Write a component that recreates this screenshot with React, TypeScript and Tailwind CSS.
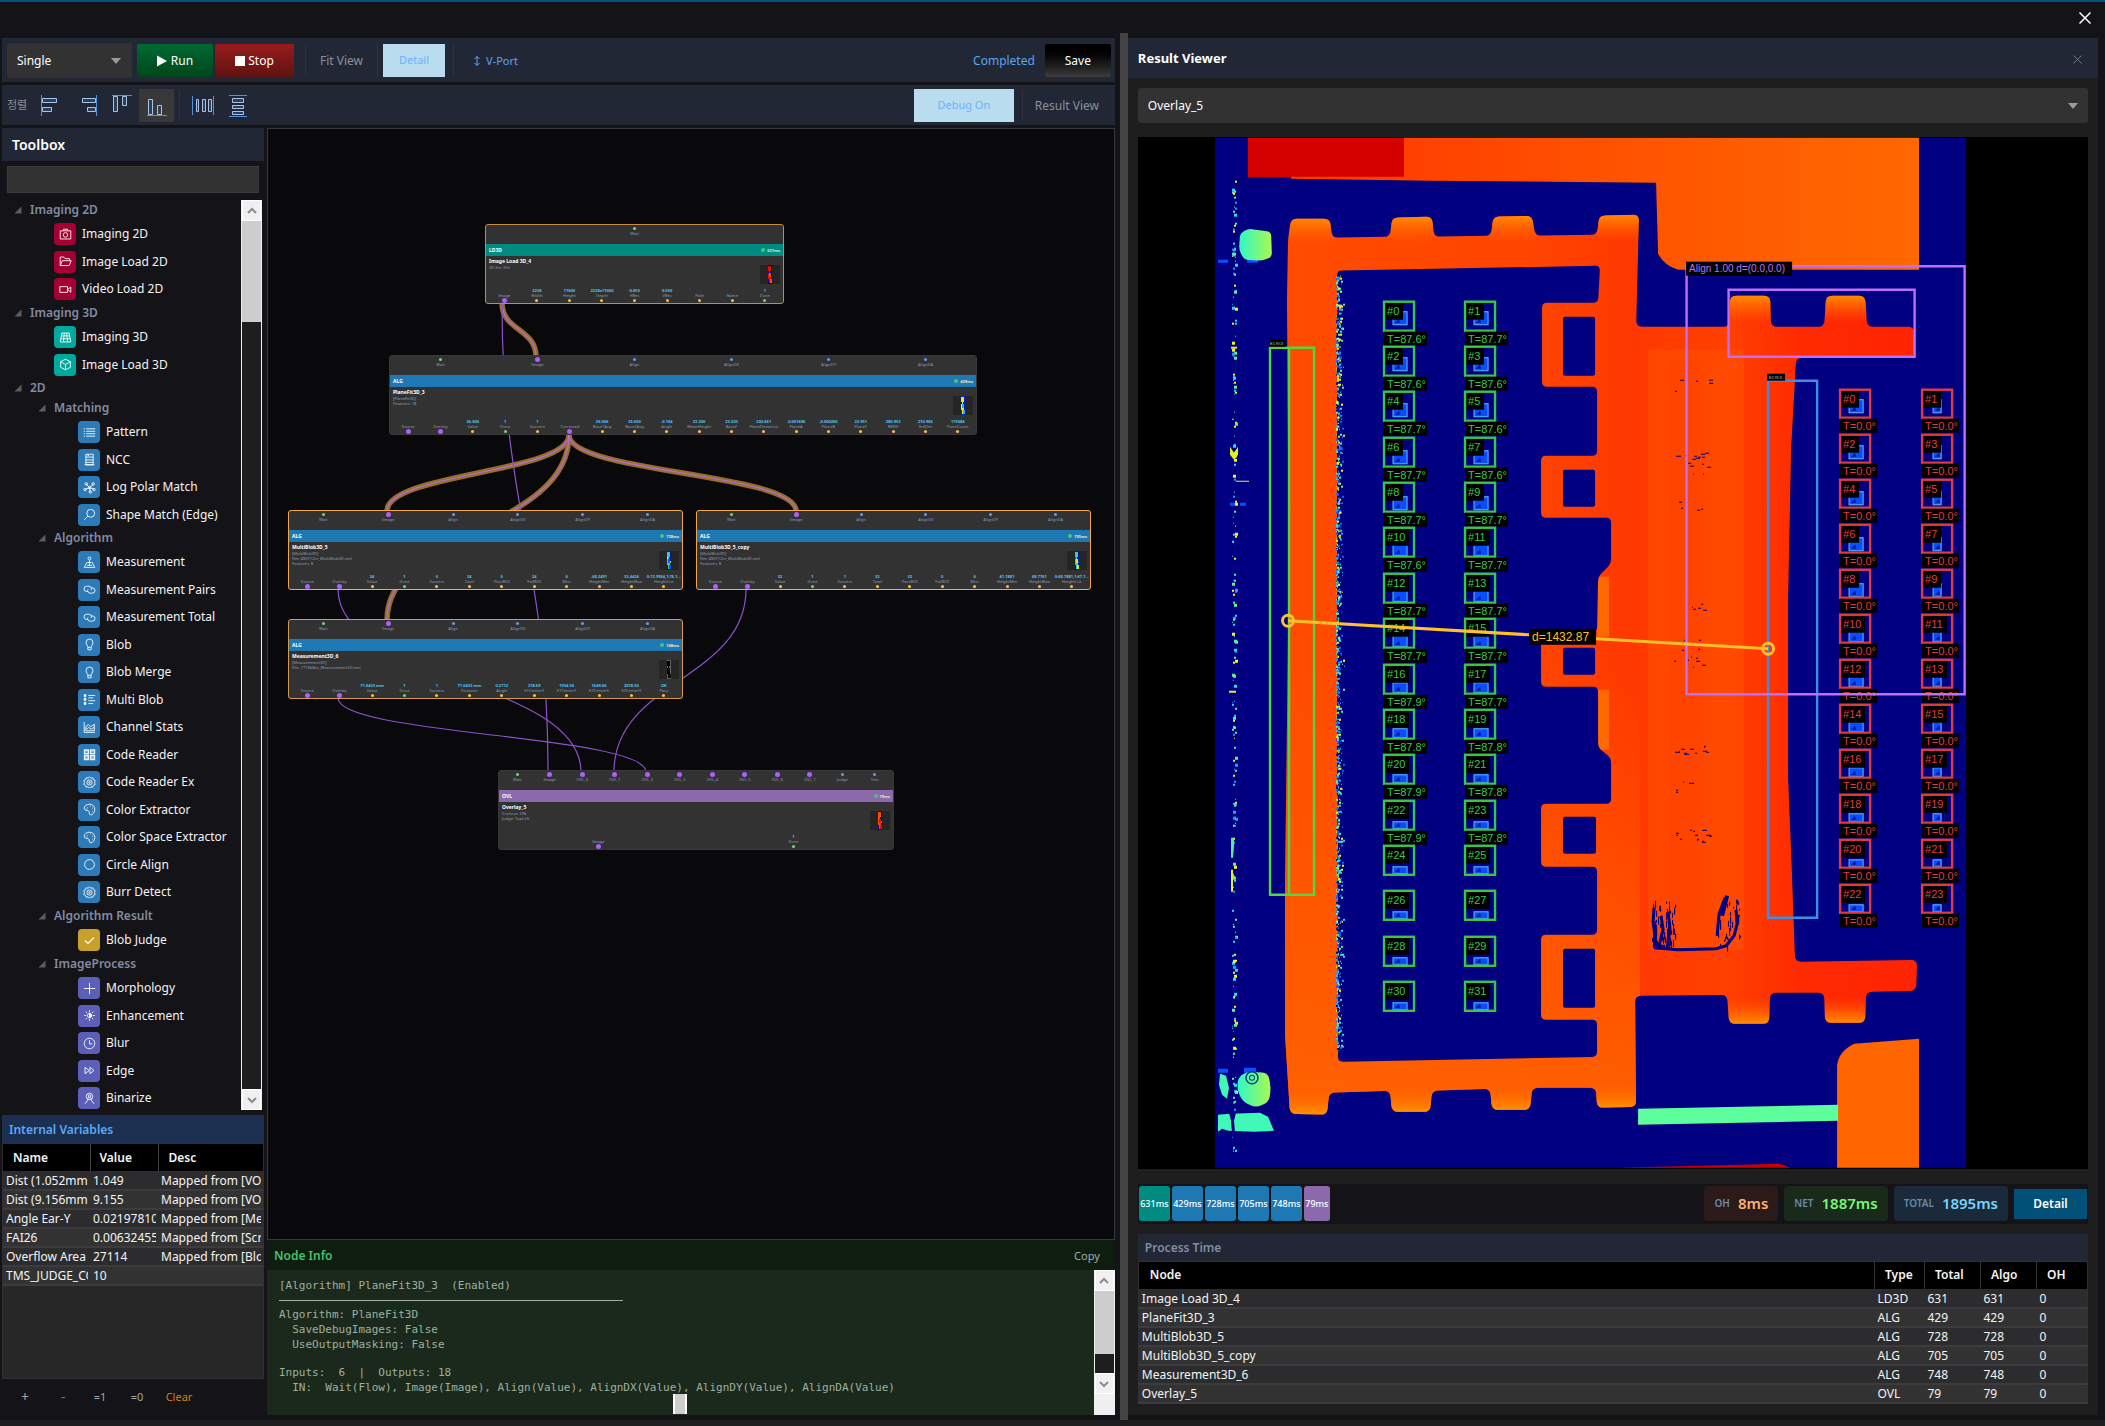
import React from "react";

/* ---------- Icons ---------- */

const glyphs: Record<string, React.ReactNode> = {
  camera: (
    <>
      <path d="M1.5 3.5h13v10h-13z" />
      <path d="M5.5 3V1.5h5V3" />
      <circle cx="8" cy="8.5" r="2.8" />
    </>
  ),
  folder: <path d="M1.5 13V2.5H6L7.5 4.5H13V7M1.5 13 4 7h11l-2.5 6z" />,
  video: (
    <>
      <path d="M1 4.5h9.5v7H1z" />
      <path d="M10.5 8 14.5 5v6.5z" />
    </>
  ),
  grid: <path d="M3.5 2.5h9l2 11h-13zM6.5 2.5l-1 11M9.5 2.5l1 11M3 6h10M2.5 9.5h11" />,
  cube: <path d="M8 1.5 14 4.5v7L8 14.5 2 11.5v-7zM2 4.5 8 8l6-3.5M8 8v6.500" />,
  lines: <path d="M4 3.5h11M4 6.5h11M4 9.5h11M4 12.5h11M1 3.5h1.5M1 6.5h1.5M1 9.5h1.5M1 12.5h1.5" />,
  server: <path d="M3.5 1.5h9v13h-9zM3.5 5h9M3.5 8.5h9M3.5 11.500h9M2 14.5h12M5.5 3.2h2" />,
  hub: (
    <>
      <path d="m8 8-4-4M8 8l4.5-3.5M8 8l-5 2.5M8 8l1 5M8 8l5 2" />
      <circle cx="8" cy="8" r="1.6" />
      <circle cx="4" cy="3.5" r="1.5" />
      <circle cx="12.5" cy="3.5" r="1.5" />
      <circle cx="2.5" cy="10.5" r="1.5" />
      <circle cx="9" cy="13.5" r="1.5" />
      <circle cx="13.5" cy="10.5" r="1.5" />
    </>
  ),
  search: (
    <>
      <circle cx="9.5" cy="6.5" r="4.8" />
      <path d="M6 10 1.5 14.5" />
    </>
  ),
  measure: (
    <>
      <circle cx="8" cy="3" r="1.8" />
      <path d="M8 5v6M5 7.5 1.5 14h13L11 7.5M5 11.5h6M5.5 8h5" />
    </>
  ),
  link: (
    <>
      <path d="M6.5 10.5h-2a3 3 0 0 1 0-6.500h3a3 3 0 0 1 2.500 4.500" />
      <path d="M9.5 6h2a3 3 0 0 1 0 6.500h-3A3 3 0 0 1 6 8" />
    </>
  ),
  bulb: <path d="M6 11.5C6 9.5 3.8 8.5 3.8 5.5a4.2 4.2 0 0 1 8.4 0c0 3-2.200 4-2.200 6zM6 11.5v3h4v-3" />,
  detail: (
    <>
      <path d="M6.5 3H15M6.5 6h6M6.5 9.5H15M6.5 13h6" />
      <path d="M1.5 2h2v2.5h-2zM1.5 6.5h2V9h-2zM1.5 11.5h2V14h-2z" fill="currentColor" />
    </>
  ),
  chart: (
    <>
      <path d="M1.5 1.5V14h13" />
      <path d="M3.5 12V7l3-2.5 3 2.5L14 4v8z" />
      <path d="m4 10 3-2 3 2 3.5-2" />
    </>
  ),
  qr: (
    <>
      <path d="M2 2.5h4.500v4.500H2zM9.5 2.5H14v4.500H9.500zM2 9.5h4.500V14H2zM9.5 9.5H14V14H9.500z" strokeWidth="2" />
      <path d="M4 4.5h.8M11.5 4.5h.8M4 11.5h.8M11.5 11.5h.8" />
    </>
  ),
  gear: (
    <>
      <path d="m8 1 1.700 1.700 2.400-.5.7 2.300 2.200 1-.8 2.500.8 2.500-2.200 1-.7 2.300-2.400-.5L8 15l-1.700-1.700-2.400.5-.7-2.300-2.200-1 .8-2.500L1 5.500l2.200-1 .7-2.300 2.400.5z" />
      <circle cx="8" cy="8" r="3.2" />
      <circle cx="8" cy="8" r="1" />
    </>
  ),
  palette: (
    <>
      <path d="M6.5 9.5C5 8.5 1.5 9.5 1.5 6.5c0-3 3-5 6.500-5s6.500 2.500 6.500 6.300-2.500 6.700-5 6.700c-2.800 0-.8-3.700-3-5z" />
      <path d="M5 5.5h.6M8.5 4h.6M11.5 6.5h.6M11.5 10h.6M4.5 7h.6" strokeWidth="1.8" />
    </>
  ),
  circle: <circle cx="8" cy="8" r="6" />,
  check: <path d="m2.5 8 3.700 3.700L13.500 4.300" strokeWidth="1.5" />,
  plus: <path d="M8 1v14M1 8h14" />,
  sun: (
    <>
      <circle cx="8" cy="8" r="2.6" />
      <path d="M8 5.5a2.5 2.5 0 0 1 0 5z" fill="currentColor" />
      <path d="M8 1.5V4M8 12v2.500M1.5 8H4M12 8h2.500M3.300 3.300 5 5M11 11l1.700 1.700M12.700 3.300 11 5M5 11l-1.700 1.700" />
    </>
  ),
  clock: (
    <>
      <circle cx="8" cy="8" r="6.5" />
      <path d="M8 4v4.5h3.500" />
    </>
  ),
  forward: <path d="M2.5 4v8l5-4zM8.5 4v8l5-4z" />,
  badge: (
    <>
      <circle cx="8" cy="5.5" r="4" />
      <circle cx="8" cy="5" r="1.5" />
      <path d="M6.5 9 2.5 14.5M9.500 9l4 5.500M5 8.500c2-2 4-2 6 0" />
    </>
  ),
};

function Glyph({ name }: { name: string }) {
  return (
    <svg viewBox="0 0 16 16" className="size-[13px]" fill="none" stroke="currentColor" strokeWidth="1.2" aria-hidden="true">
      {glyphs[name]}
    </svg>
  );
}

/* ---------- Toolbox ---------- */

type Group = { title: string; tone: string; items: [string, string][]; nested?: boolean };

const groups: Group[] = [
  { title: "Imaging 2D", tone: "bg-[#a50034]", items: [["camera", "Imaging 2D"], ["folder", "Image Load 2D"], ["video", "Video Load 2D"]] },
  { title: "Imaging 3D", tone: "bg-[#00a99d]", items: [["grid", "Imaging 3D"], ["cube", "Image Load 3D"]] },
  { title: "2D", tone: "", items: [] },
  {
    title: "Matching",
    tone: "bg-[#2d7ab8]",
    nested: true,
    items: [["lines", "Pattern"], ["server", "NCC"], ["hub", "Log Polar Match"], ["search", "Shape Match (Edge)"]],
  },
  {
    title: "Algorithm",
    tone: "bg-[#2d7ab8]",
    nested: true,
    items: [
      ["measure", "Measurement"],
      ["link", "Measurement Pairs"],
      ["link", "Measurement Total"],
      ["bulb", "Blob"],
      ["bulb", "Blob Merge"],
      ["detail", "Multi Blob"],
      ["chart", "Channel Stats"],
      ["qr", "Code Reader"],
      ["gear", "Code Reader Ex"],
      ["palette", "Color Extractor"],
      ["palette", "Color Space Extractor"],
      ["circle", "Circle Align"],
      ["gear", "Burr Detect"],
    ],
  },
  { title: "Algorithm Result", tone: "bg-[#c8a02c]", nested: true, items: [["check", "Blob Judge"]] },
  {
    title: "ImageProcess",
    tone: "bg-[#5c5fb8]",
    nested: true,
    items: [["plus", "Morphology"], ["sun", "Enhancement"], ["clock", "Blur"], ["forward", "Edge"], ["badge", "Binarize"]],
  },
];

function TreeGroup({ group }: { group: Group }) {
  return (
    <li>
      <button className={"flex h-5 w-full items-center gap-2 text-xs font-semibold text-[#838ba0] " + (group.nested ? "pl-9" : "pl-3")}>
        <svg viewBox="0 0 8 8" className="size-2" aria-hidden="true">
          <path d="M7.5 .5v7H.5z" fill="#5c5c5c" />
        </svg>
        {group.title}
      </button>
      <ul>
        {group.items.map(([icon, label]) => (
          <li key={label} className={"flex h-7 items-center even:h-[27px] " + (group.nested ? "pl-[76px]" : "pl-[52px]")}>
            <button className="flex items-center gap-[6px] text-xs text-[#f4f4f4]">
              <span className={"flex size-[22px] items-center justify-center rounded-sm text-white/90 " + group.tone}>
                <Glyph name={icon} />
              </span>
              {label}
            </button>
          </li>
        ))}
      </ul>
    </li>
  );
}

function Chevron({ down }: { down?: boolean }) {
  return (
    <svg viewBox="0 0 10 10" className="size-[10px]" fill="none" stroke="#8c8c8c" strokeWidth="2" aria-hidden="true">
      <path d={down ? "M1 3l4 4 4-4" : "M1 7l4-4 4 4"} />
    </svg>
  );
}

function ScrollButton({ down }: { down?: boolean }) {
  return (
    <button
      aria-label={down ? "Scroll down" : "Scroll up"}
      className="flex h-[21px] shrink-0 items-center justify-center border border-[#c8c8c8] bg-[#f0f0f0] outline outline-1 -outline-offset-1 outline-white"
    >
      <Chevron down={down} />
    </button>
  );
}

const variables = [
  ["Dist (1.052mm)", "1.049", "Mapped from [VOL]"],
  ["Dist (9.156mm)", "9.155", "Mapped from [VOL]"],
  ["Angle Ear-Y", "0.02197810", "Mapped from [Mea]"],
  ["FAI26", "0.00632455", "Mapped from [Scr]"],
  ["Overflow Area", "27114", "Mapped from [Blob]"],
  ["TMS_JUDGE_CO", "10", ""],
];

function Toolbox() {
  return (
    <aside className="flex w-[262px] shrink-0 flex-col">
      <h2 className="flex h-[33px] shrink-0 items-center bg-[#222735] px-[10px] pt-px text-sm font-semibold text-white">Toolbox</h2>
      <input aria-label="Search tools" className="mx-[5px] mt-[5px] h-[27px] shrink-0 border border-[#3a3a3a] bg-[#323232] px-2 text-xs text-white" />
      <div className="mt-[7px] mb-[5px] flex min-h-0 flex-1 overflow-hidden">
        <ul className="min-h-0 flex-1 overflow-hidden">
          {groups.map((g) => (
            <TreeGroup key={g.title} group={g} />
          ))}
        </ul>
        <div className="mr-[2px] flex w-[21px] flex-col border-x border-[#f0f0f0] bg-[#1e1e1e]">
          <ScrollButton />
          <div className="h-[101px] bg-[#cdcdcd]" />
          <div className="flex-1" />
          <ScrollButton down />
        </div>
      </div>
      <h2 className="flex h-7 shrink-0 items-center bg-[#1c2f50] px-[7px] pt-px text-xs font-semibold text-[#5aa9f8]">Internal Variables</h2>
      <div className="h-[236px] shrink-0 overflow-hidden border border-[#303033] bg-[#272727]">
        <table className="w-full table-fixed text-left text-xs text-[#f4f4f4]">
          <thead>
            <tr className="h-[27px] bg-black">
              <th className="w-[87px] border-r border-[#444] pl-[10px] font-semibold">Name</th>
              <th className="w-[68px] border-r border-[#444] pl-[9px] font-semibold">Value</th>
              <th className="pl-[10px] font-semibold">Desc</th>
            </tr>
          </thead>
          <tbody>
            {variables.map((row) => (
              <tr key={row[0]} className="h-[19px] border-b-2 border-[#3c3c3e] bg-[#2c2c2e] even:bg-[#323232]">
                {row.map((cell, i) => (
                  <td key={i} className="pr-[2px] pl-[3px] leading-[17px] whitespace-nowrap">
                    <div className="overflow-hidden">{cell}</div>
                  </td>
                ))}
              </tr>
            ))}
          </tbody>
        </table>
      </div>
      <div className="flex h-9 shrink-0 items-center pl-1 text-[11px] text-[#a0a4ac]">
        <button className="w-[38px] text-sm">+</button>
        <button className="w-[38px] text-sm text-[#e04848]">-</button>
        <button className="w-[36px]">=1</button>
        <button className="w-[38px]">=0</button>
        <button className="w-[46px] text-[#d08010]">Clear</button>
      </div>
    </aside>
  );
}

/* ---------- Flow canvas ---------- */

type Port = { label: string; value?: string; kind: "image" | "flow" | "value" | "align" };
type FlowNode = {
  name: string;
  tag: string;
  time: string;
  place: string;
  border: string;
  head: string;
  notes: string[];
  thumb: string[];
  inputs: Port[];
  outputs: Port[];
};

const portTone = { image: "size-[5px] bg-[#b05cff]", flow: "size-[3px] bg-[#6fdc6f]", value: "size-[3px] bg-[#ffc038]", align: "size-[3px] bg-[#5a9cf8]" };

const img = (label: string): Port => ({ label, kind: "image" });
const flow = (label: string, value?: string): Port => ({ label, value, kind: "flow" });
const val = (label: string, value?: string): Port => ({ label, value, kind: "value" });
const ali = (label: string): Port => ({ label, kind: "align" });

const algInputs = [flow("Wait"), img("Image"), ali("Align"), ali("AlignDX"), ali("AlignDY"), ali("AlignDA")];

const nodes: FlowNode[] = [
  {
    name: "Image Load 3D_4",
    tag: "LD3D",
    time: "631ms",
    place: "left-[217px] top-[95px] w-[299px]",
    border: "border-[#c98b3a]",
    head: "bg-[#008c80]",
    notes: ["3D Src: File"],
    thumb: ["#e01000", "#000090", "#ff4800", "#000090"],
    inputs: [flow("Wait")],
    outputs: [
      img("Image"),
      val("Width", "2238"),
      val("Height", "11000"),
      val("Depth", "2238x11000"),
      val("HRes", "0.050"),
      val("VRes", "0.050"),
      val("Path"),
      val("Name"),
      flow("Done", "1"),
    ],
  },
  {
    name: "PlaneFit3D_3",
    tag: "ALG",
    time: "429ms",
    place: "left-[121px] top-[226px] w-[588px]",
    border: "border-[#38383a]",
    head: "bg-[#1e78b4]",
    notes: ["[PlaneFit3D]", "Features: 18"],
    thumb: ["#d8f020", "#0020e0", "#20b0ff", "#000090"],
    inputs: algInputs,
    outputs: [
      img("Source"),
      img("Overlay"),
      val("Value", "26.000"),
      flow("Done", "1"),
      val("Success", "1"),
      img("Corrected"),
      val("Base1Avg", "26.000"),
      val("Base2Avg", "25.000"),
      val("Angle", "-0.104"),
      val("MeanHeight", "23.200"),
      val("BaseZ", "23.200"),
      val("PlaneDeviation", "202.661"),
      val("PlaneA", "-0.001606"),
      val("PlaneB", "-0.000200"),
      val("PlaneC", "22.951"),
      val("RMSE", "280.953"),
      val("StdDev", "210.966"),
      val("PointCount", "175084"),
    ],
  },
  {
    name: "MultiBlob3D_5",
    tag: "ALG",
    time: "728ms",
    place: "left-[20px] top-[381px] w-[395px]",
    border: "border-[#f5a742]",
    head: "bg-[#1e78b4]",
    notes: ["[MultiBlob3D]", "File: 493712cc_MultiBlob3D.xml", "Features: 8"],
    thumb: ["#30d0c0", "#0010a0", "#1050ff", "#e0f020"],
    inputs: algInputs,
    outputs: [
      img("Source"),
      img("Overlay"),
      val("Value", "24"),
      flow("Done", "1"),
      val("Success", "0"),
      val("Total", "24"),
      val("PassROI", "0"),
      val("FailROI", "24"),
      val("Miss", "0"),
      val("HeightMin", "-68.2491"),
      val("HeightMax", "33.4424"),
      val("HeightList", "0:72.9964,1:76.1..."),
    ],
  },
  {
    name: "MultiBlob3D_5_copy",
    tag: "ALG",
    time: "705ms",
    place: "left-[428px] top-[381px] w-[395px]",
    border: "border-[#f5a742]",
    head: "bg-[#1e78b4]",
    notes: ["[MultiBlob3D]", "File: 493712cc_MultiBlob3D.xml", "Features: 8"],
    thumb: ["#30d0c0", "#0010a0", "#d8f020", "#1050ff"],
    inputs: algInputs,
    outputs: [
      img("Source"),
      img("Overlay"),
      val("Value", "32"),
      flow("Done", "1"),
      val("Success", "1"),
      val("Total", "32"),
      val("PassROI", "32"),
      val("FailROI", "0"),
      val("Miss", "0"),
      val("HeightMin", "41.1881"),
      val("HeightMax", "68.7761"),
      val("HeightList", "0:68.7881,1:67.1..."),
    ],
  },
  {
    name: "Measurement3D_6",
    tag: "ALG",
    time: "748ms",
    place: "left-[20px] top-[490px] w-[395px]",
    border: "border-[#d89a44]",
    head: "bg-[#1e78b4]",
    notes: ["[Measurement3D]", "File: 7719b8ac_Measurement3D.xml"],
    thumb: ["#000000", "#606060", "#101010", "#707070"],
    inputs: algInputs,
    outputs: [
      img("Source"),
      img("Overlay"),
      val("Value", "71.6433 mm"),
      flow("Done", "1"),
      val("Success", "1"),
      val("Distance", "71.6433 mm"),
      val("Angle", "0.2712"),
      val("E1CenterX", "218.69"),
      val("E1CenterY", "1934.50"),
      val("E2CenterX", "1649.00"),
      val("E2CenterY", "2018.50"),
      val("Pass", "OK"),
    ],
  },
  {
    name: "Overlay_5",
    tag: "OVL",
    time: "79ms",
    place: "left-[230px] top-[641px] w-[396px]",
    border: "border-[#38383a]",
    head: "bg-[#8c68ac]",
    notes: ["Contour: ON", "Judge: TopLeft"],
    thumb: ["#ff4800", "#000090", "#e01000", "#ff6000"],
    inputs: [
      flow("Wait"),
      img("Image"),
      img("OVL_0"),
      img("OVL_1"),
      img("OVL_2"),
      img("OVL_3"),
      img("OVL_4"),
      img("OVL_5"),
      img("OVL_6"),
      img("OVL_7"),
      ali("Judge"),
      ali("Text"),
    ],
    outputs: [img("Image"), flow("Done", "1")],
  },
];

function Dot({ kind }: { kind: Port["kind"] }) {
  return (
    <span className="flex h-[5px] items-center">
      <span className={"rounded-full " + portTone[kind]} />
    </span>
  );
}

function NodeCard({ node }: { node: FlowNode }) {
  return (
    <article className={"absolute flex h-20 flex-col overflow-hidden rounded-[3px] border bg-[#323232] text-[4px] leading-[5px] font-medium text-[#8090a4] " + node.place + " " + node.border}>
      <div className="flex h-[19px] px-[2px] pt-[1px]">
        {node.inputs.map((p) => (
          <div key={p.label} className="flex w-0 flex-1 flex-col items-center whitespace-nowrap">
            <Dot kind={p.kind} />
            {p.label}
          </div>
        ))}
      </div>
      <header className={"flex h-3 shrink-0 items-center justify-between px-[3px] " + node.head}>
        <b className="text-[5px] text-white">{node.tag}</b>
        <span className="flex items-center gap-[2px] font-bold text-[#f0e4c4]">
          <span className="size-1 rounded-full bg-[#44c878]" />
          {node.time}
        </span>
      </header>
      <div className="flex flex-1 justify-between px-[3px] pt-[2px]">
        <div>
          <h3 className="mb-[1px] text-[5px] leading-[6px] font-bold text-white">{node.name}</h3>
          {node.notes.map((n) => (
            <p key={n}>{n}</p>
          ))}
        </div>
        <svg viewBox="0 0 20 19" className="mt-[7px] h-[19px] w-5" aria-hidden="true">
          <rect width="20" height="19" rx="1" fill="#252525" />
          <rect x="8" width="4" height="19" fill={node.thumb[1]} />
          <path d="M8 1h3v5h-1v4h1v8H9v-4H8z" fill={node.thumb[0]} />
          <path d="M9 8h2v4H9zM10 14h2v4h-2z" fill={node.thumb[2]} />
          <path d="M8 6h1v2H8zM11 10h1v2h-1z" fill={node.thumb[3]} />
        </svg>
      </div>
      <div className="flex h-4 items-end px-[2px]">
        {node.outputs.map((p) => (
          <div key={p.label} className="flex w-0 flex-1 flex-col items-center whitespace-nowrap">
            <span className="font-bold text-[#54c4ee]">{p.value}</span>
            {p.label}
            <Dot kind={p.kind} />
          </div>
        ))}
      </div>
    </article>
  );
}

const strongEdges = [
  "M502 303C502 331 536 328 536 357",
  "M569 435C569 473 387 473 387 511",
  "M569 435C569 530 387 530 387 620",
  "M569 435C569 473 796 473 796 511",
];
const thinEdges = [
  "M502 303C502 510 548 560 548 772",
  "M338 589C338 680 581 680 581 772",
  "M338 698C338 735 646 735 646 772",
  "M746 589C746 680 614 680 614 772",
];

function FlowCanvas() {
  return (
    <div className="relative min-h-0 flex-1 overflow-hidden border border-[#38383a] bg-[#09090b]">
      <svg className="absolute inset-0 size-full" fill="none" aria-hidden="true">
        <g transform="translate(-268 -129)">
          {strongEdges.map((d) => (
            <path key={d} d={d} stroke="#94702a" strokeWidth="5.5" />
          ))}
          {strongEdges.map((d) => (
            <path key={d} d={d} stroke="#bc68dc" strokeWidth="1.2" />
          ))}
          {thinEdges.map((d) => (
            <path key={d} d={d} stroke="#8e50cc" strokeWidth="1.2" />
          ))}
        </g>
      </svg>
      {nodes.map((n) => (
        <NodeCard key={n.name} node={n} />
      ))}
    </div>
  );
}

function NodeInfo() {
  return (
    <section className="flex h-[175px] shrink-0 flex-col bg-[#1a291c]">
      <header className="flex h-[30px] shrink-0 items-center justify-between bg-[#0f1c10] pt-[2px] pr-[15px] pl-[7px]">
        <h2 className="text-xs font-semibold text-[#40c468]">Node Info</h2>
        <button className="text-[11px] text-[#a4b0a4]">Copy</button>
      </header>
      <div className="flex min-h-0 flex-1">
        <div className="flex min-w-0 flex-1 flex-col">
          <div className="flex-1 overflow-hidden pt-2 pl-3 font-['DejaVu_Sans_Mono',monospace] text-[11px] leading-[15px] whitespace-pre text-[#9fb09f]">
            <p>[Algorithm] PlaneFit3D_3  (Enabled)</p>
            <hr className="mt-[7px] mb-[6px] w-[344px] border-[#9fb09f]" />
            <p>Algorithm: PlaneFit3D</p>
            <p>  SaveDebugImages: False</p>
            <p>  UseOutputMasking: False</p>
            <p className="mt-[13px]">Inputs:  6  |  Outputs: 18</p>
            <p>  IN:  Wait(Flow), Image(Image), Align(Value), AlignDX(Value), AlignDY(Value), AlignDA(Value)</p>
          </div>
          <div className="flex h-[21px] justify-center">
            <div className="h-5 w-[14px] border-x-2 border-white bg-[#cdcdcd]" />
          </div>
        </div>
        <div className="flex w-[21px] flex-col border-x border-[#f0f0f0] bg-[#1e1e1e]">
          <ScrollButton />
          <div className="flex-1 bg-[#cdcdcd]" />
          <div className="h-[19px]" />
          <ScrollButton down />
          <div className="h-[21px] bg-[#f0f0f0]" />
        </div>
      </div>
    </section>
  );
}

/* ---------- Toolbars ---------- */

function Divider() {
  return <span className="h-[31px] w-px bg-[#2f3240]" />;
}

function AlignIcon({ bars, rule, w = 20 }: { bars: string; rule: string; w?: number }) {
  return (
    <svg width={w} height="22" viewBox={`0 0 ${w} 22`} fill="none" aria-hidden="true">
      <path d={rule} stroke="#4f94dc" />
      <path d={bars} stroke="#a9c4e4" fill="#2b3f5c" />
    </svg>
  );
}

function Toolbars() {
  return (
    <div className="flex flex-col gap-[3px]">
      <div className="flex h-11 items-center bg-[#222735] pt-px pr-1 pl-[5px] text-xs">
        <div className="relative w-[125px]">
          <select aria-label="Run mode" className="h-[35px] w-full appearance-none rounded-[3px] bg-[#323232] px-[10px] pt-px text-xs text-white">
            <option>Single</option>
          </select>
          <svg viewBox="0 0 10 6" className="pointer-events-none absolute top-[15px] right-[11px] h-[6px] w-[10px]" aria-hidden="true">
            <path d="M0 0h10L5 6z" fill="#9a9a9a" />
          </svg>
        </div>
        <button className="ml-[5px] flex h-[33px] w-[76px] items-center justify-center gap-1 rounded-[2px] bg-linear-to-b from-[#006a32] to-[#00461c] text-white">
          <svg viewBox="0 0 10 12" className="h-3 w-[10px]" aria-hidden="true">
            <path d="M0 .5 10 6 0 11.5z" fill="#fff" />
          </svg>
          Run
        </button>
        <button className="ml-[2px] flex h-[33px] w-[79px] items-center justify-center gap-[3px] rounded-[2px] bg-linear-to-b from-[#981c1c] to-[#601212] text-white">
          <span className="size-[10px] bg-white" />
          Stop
        </button>
        <div className="ml-[11px] flex items-center">
          <Divider />
          <button className="w-[71px] pt-px text-[#8b8f98]">Fit View</button>
          <Divider />
          <button className="ml-[5px] h-[33px] w-[62px] bg-[#b9dcee] text-[11px] text-[#6cb2ff]">Detail</button>
          <span className="ml-2" />
          <Divider />
          <button className="ml-5 flex items-center gap-[6px] pt-px text-[11px] text-[#5aa5f4]">
            <svg viewBox="0 0 6 10" className="h-[10px] w-[6px]" fill="none" stroke="currentColor" aria-hidden="true">
              <path d="M3 .5v9M.5 3 3 .5 5.5 3M.5 7 3 9.5 5.5 7" />
            </svg>
            V-Port
          </button>
        </div>
        <span className="ml-auto pt-px text-[#5aa5f4]">Completed</span>
        <button className="ml-[10px] h-[33px] w-[66px] rounded-[2px] bg-linear-to-b from-black to-[#3c3c3c] text-white">Save</button>
      </div>
      <div className="flex h-10 items-center bg-[#222735] pt-px pr-1 pl-[5px] text-xs">
        <span className="w-[34px] text-[11px] text-[#8b8f98]">정렬</span>
        <button aria-label="Align left" className="w-[38px]">
          <AlignIcon rule="M.5 0v21" bars="M1.5 3.5h14v4H1.500zM1.500 12.500h9v4H1.500z" />
        </button>
        <button aria-label="Align right" className="w-[33px]">
          <AlignIcon rule="M17.5 0v21" bars="M3.5 3.5h13v4H3.500zM8.500 12.500h8v4H8.500z" />
        </button>
        <button aria-label="Align top" className="w-[27px]">
          <AlignIcon rule="M0 .5h20" bars="M1.5 1.5h4v15H1.500zM10.500 1.500h4v9H10.500z" />
        </button>
        <button aria-label="Align bottom" className="flex h-[33px] w-[35px] items-center justify-center bg-[#383838]">
          <AlignIcon rule="M0 20.5h20" bars="M1.5 4.5h4v15H1.500zM10.500 10.500h4v9H10.500z" />
        </button>
        <span className="ml-[5px]" />
        <Divider />
        <button aria-label="Distribute horizontally" className="ml-3 w-[37px]">
          <AlignIcon w={22} rule="M.5 1v19M21.5 1v19" bars="M4.5 4.5h2v12h-2zM10.5 4.5h3v12h-3zM16.5 4.5h3v12h-3z" />
        </button>
        <button aria-label="Distribute vertically">
          <AlignIcon w={18} rule="M0 .5h18M0 21.500h18" bars="M3.5 3.5h11v4h-11zM3.5 10.5h11v3h-11zM3.5 16.5h11v3h-11z" />
        </button>
        <button className="mr-2 ml-auto h-[33px] w-[100px] bg-[#b9dcee] text-[11px] text-[#6cb2ff]">Debug On</button>
        <Divider />
        <button className="w-[88px] text-[#8b8f98]">Result View</button>
      </div>
    </div>
  );
}

/* ---------- Height map ---------- */

type Pt = [number, number];

function rounded(points: Pt[], radius: number) {
  const n = points.length;
  return (
    points
      .map((p, i) => {
        const a = points[(i + n - 1) % n];
        const b = points[(i + 1) % n];
        const toward = (q: Pt) => {
          const len = Math.hypot(q[0] - p[0], q[1] - p[1]);
          const k = Math.min(radius, len / 2) / len;
          return `${(p[0] + (q[0] - p[0]) * k).toFixed(1)} ${(p[1] + (q[1] - p[1]) * k).toFixed(1)}`;
        };
        return `${i ? "L" : "M"}${toward(a)}Q${p[0]} ${p[1]} ${toward(b)}`;
      })
      .join("") + "Z"
  );
}

const frameOuter: Pt[] = [
  [1288, 240], [1291, 219], [1330, 219], [1332, 238], [1390, 237], [1392, 218], [1432, 217], [1434, 237], [1491, 236],
  [1493, 217], [1532, 216], [1535, 236], [1597, 235], [1599, 216], [1639, 215], [1636, 327], [1729, 327], [1730, 296],
  [1770, 296], [1771, 327], [1824, 327], [1826, 296], [1865, 296], [1867, 327], [1914, 327], [1914, 358], [1796, 358],
  [1791, 450], [1788, 600], [1788, 780], [1791, 850], [1795, 962], [1917, 960], [1916, 991], [1866, 992], [1865, 1023],
  [1825, 1023], [1824, 993], [1770, 993], [1769, 1024], [1729, 1024], [1727, 995], [1635, 996], [1636, 1107], [1597, 1108],
  [1596, 1088], [1532, 1088], [1530, 1110], [1492, 1110], [1490, 1089], [1432, 1091], [1430, 1112], [1392, 1112],
  [1390, 1091], [1329, 1093], [1327, 1115], [1290, 1114], [1285, 1036], [1285, 881], [1288, 640], [1288, 463], [1287, 297],
];

const frameInner: Pt[] = [
  [1337, 271], [1600, 266], [1598, 303], [1542, 303], [1542, 387], [1597, 387], [1597, 456], [1541, 456], [1541, 518],
  [1611, 518], [1611, 564], [1598, 577], [1597, 632], [1541, 632], [1541, 687], [1598, 687], [1598, 748], [1611, 758],
  [1611, 804], [1541, 804], [1541, 867], [1597, 867], [1597, 935], [1541, 935], [1541, 1020], [1597, 1020], [1597, 1057],
  [1338, 1062], [1337, 700],
];

const pockets = [
  [1563, 317, 32, 59],
  [1563, 470, 32, 37],
  [1563, 648, 32, 27],
  [1563, 817, 33, 37],
  [1563, 949, 32, 59],
];

const tipsUp = [
  [1288, 217], [1388, 216], [1490, 215], [1596, 214], [1727, 295], [1823, 295],
];
const tipsDown = [
  [1287, 1088], [1388, 1086], [1488, 1084], [1594, 1082], [1726, 998], [1822, 997],
];

function sequence(seed: number) {
  let s = seed;
  return () => {
    s = (s * 16807) % 2147483647;
    return s / 2147483647;
  };
}

const rand = sequence(4711);
const noiseTones = ["#f8f020", "#30d8f0", "#60f090", "#20a0f0", "#1060ff", "#000080"];
const edgeNoise = Array.from({ length: 1300 }, () => ({
  x: 1336 + Math.round(rand() * rand() * 8),
  y: 274 + Math.round(rand() * 778),
  w: 1 + Math.round(rand()),
  c: noiseTones[Math.floor(rand() * 6)],
}));
const seamNoise = Array.from({ length: 230 }, () => ({
  x: 1232 + Math.round(rand() * 3),
  y: 180 + Math.round(rand() * 986),
  w: 1 + Math.round(rand() * 2),
  c: noiseTones[Math.floor(rand() * 4)],
}));
const scratches = Array.from({ length: 70 }, () => {
  const band = [380, 452, 465, 500, 600, 640, 655, 745, 780, 830][Math.floor(rand() * 10)];
  return { x: 1674 + Math.round(rand() * 36), y: band + Math.round(rand() * 12), w: 1 + Math.round(rand() * 4) };
});
const scuffs = Array.from({ length: 90 }, () => {
  const side = rand() > 0.4;
  return {
    x: side ? 1652 + Math.round(rand() * 24) : 1718 + Math.round(rand() * 22),
    y: 900 + Math.round(rand() * 44),
    h: 2 + Math.round(rand() * 6),
  };
});

const okAngles = [
  "87.6", "87.7", "87.6", "87.6", "87.7", "87.6", "87.7", "87.6", "87.7", "87.7", "87.6", "87.7",
  "87.7", "87.7", "87.7", "87.7", "87.9", "87.7", "87.8", "87.8", "87.9", "87.8", "87.9", "87.8",
];

function Marker({ x, y, h, index, angle, tone }: { x: number; y: number; h: number; index: number; angle?: string; tone: string }) {
  const row = Math.floor(index / 2);
  const odd = index % 2 === 1;
  const top = y + Math.min(11 + row, h - 9);
  const narrow = odd && h === 30;
  const bw = narrow ? 8 : 14;
  const bx = x + (narrow ? 12 : 10);
  const bh = Math.min(13, y + h - 2 - top);
  return (
    <g>
      <rect x={bx} y={top} width={bw} height={bh} fill="#0a4cff" stroke="#50a8f0" strokeWidth="1.2" />
      <path d={`M${bx + 2} ${top + bh - 2}l4-4 1 4z`} fill="#001a90" />
      <rect x={x + 1} y={y + 2} width={index > 9 ? 25 : 19} height="17" fill="#000" />
      <rect x={x + 1} y={y + 1} width="30" height={h - 2} fill="none" stroke={tone} strokeWidth="2.4" />
      <text x={x + 4} y={y + 14} fill={tone} fontSize="11">
        #{index}
      </text>
      {angle && (
        <>
          <rect x={x + 1} y={y + h} width={angle.length > 3 ? 43 : 37} height="14" fill="#000" />
          <text x={x + 4} y={y + h + 11} fill={tone} fontSize="11">
            T={angle}°
          </text>
        </>
      )}
    </g>
  );
}

function HeightMap() {
  const outer = rounded(frameOuter, 6);
  return (
    <svg viewBox="1138 138 950 1030" className="h-full w-full" role="img" aria-label="Overlay_5 result image" fontFamily="Liberation Sans, sans-serif">
      <defs>
        <linearGradient id="frame" x1="0" y1="0" x2="1" y2="0">
          <stop offset="0" stopColor="#ff4c00" />
          <stop offset="0.4" stopColor="#ff4400" />
          <stop offset="0.55" stopColor="#ff3800" />
          <stop offset="0.7" stopColor="#ff4000" />
          <stop offset="0.82" stopColor="#ff2a00" />
          <stop offset="1" stopColor="#ff2400" />
        </linearGradient>
        <linearGradient id="low" x1="0" y1="0" x2="0" y2="1">
          <stop offset="0.5" stopColor="#ff6400" stopOpacity="0" />
          <stop offset="1" stopColor="#ff6400" stopOpacity="0.9" />
        </linearGradient>
        <linearGradient id="plate" x1="0" y1="0" x2="1" y2="0">
          <stop offset="0" stopColor="#ff3600" />
          <stop offset="0.5" stopColor="#ff5200" />
          <stop offset="1" stopColor="#ff6800" />
        </linearGradient>
        <linearGradient id="tipUp" x1="0" y1="0" x2="0" y2="1">
          <stop offset="0" stopColor="#ff9000" />
          <stop offset="1" stopColor="#ff6000" stopOpacity="0" />
        </linearGradient>
        <linearGradient id="tipDown" x1="0" y1="1" x2="0" y2="0">
          <stop offset="0" stopColor="#ff9800" />
          <stop offset="1" stopColor="#ff6000" stopOpacity="0" />
        </linearGradient>
        <linearGradient id="blob" x1="0" y1="0" x2="1" y2="0">
          <stop offset="0" stopColor="#30f8c8" />
          <stop offset="1" stopColor="#a8f850" />
        </linearGradient>
        <clipPath id="frameClip">
          <path d={outer} />
        </clipPath>
      </defs>
      <rect x="1215" y="138" width="751" height="1030" fill="#000080" />

      <path d="M1248 138H1405V178L1248 177.5Z" fill="#d60000" />
      <path d="M1404 138H1919V270H1678Q1664 266 1658 254L1656 183 1430 181 1291 179V177H1404Z" fill="url(#plate)" />
      <path d="M1919 1039 1854 1044Q1838 1052 1837 1066V1168H1919Z" fill="#ff6600" />
      <path d="M1638 1109 1838 1105V1121L1638 1125Z" fill="#5cff9c" />
      <path d="M1615 1168 1700 1166 1780 1164 1790 1168Z" fill="#c80000" />

      <path d={outer} fill="url(#frame)" />
      <g clipPath="url(#frameClip)">
        <rect x="1285" y="215" width="355" height="900" fill="url(#low)" />
        {tipsUp.map(([x, y]) => (
          <rect key={x} x={x} y={y} width="46" height="28" fill="url(#tipUp)" />
        ))}
        {tipsDown.map(([x, y]) => (
          <rect key={x} x={x} y={y} width="46" height="28" fill="url(#tipDown)" />
        ))}
        <path d="M1648 350h96v600h-96z" fill="#ff5200" opacity="0.55" />
        <path d="M1670 360h34v560h-34z" fill="#ff4200" opacity="0.6" />
        <path d="M1597 577h12v60h-12zM1597 690h12v60h-12z" fill="#ff7a00" opacity="0.7" />
      </g>
      <path d={rounded(frameInner, 5)} fill="#000080" />
      {pockets.map(([x, y, w, h]) => (
        <rect key={y} x={x} y={y} width={w} height={h} rx="2" fill="#000080" />
      ))}
      <g fill="#000080">
        {scratches.map((s, i) => (
          <rect key={i} x={s.x} y={s.y} width={s.w} height="1" />
        ))}
        {scuffs.map((s, i) => (
          <rect key={i} x={s.x} y={s.y} width="1" height={s.h} />
        ))}
      </g>
      <g fill="none" stroke="#000080" strokeLinejoin="round">
        <path d="M1654 908l-1 14 2 14M1661 916l2 14-4 16M1668 912l2 18-3 18M1725 898l-6 16-2 22M1736 910l1 14-3 12-8 10-10 3-38 1-24-2" strokeWidth="3" />
        <path d="M1655 925v22h10M1727 896l-5 20" strokeWidth="4" />
      </g>

      {edgeNoise.map((n, i) => (
        <rect key={i} x={n.x} y={n.y} width={n.w} height={n.w} fill={n.c} />
      ))}
      {seamNoise.map((n, i) => (
        <rect key={i} x={n.x} y={n.y} width={n.w} height={n.w} fill={n.c} />
      ))}
      <path d="M1230 447l4 6 4-6v8l-4 5-4-5zM1236 481h13v1h-13zM1231 347h6v2h-6zM1229 691h7v2h-7zM1231 870h2v22h-2z" fill="#e8f020" />
      <path d="M1231 838h3v8l-1 12h-2z" fill="#50f0a0" />
      <path d="M1218 260h10v3h-10zM1247 260h11v3h-11zM1218 1069h10v4h-10zM1244 1068h12v5h-12zM1230 503h5v3h-5zM1240 503h6v3h-6z" fill="#0a50ff" />
      <path d={rounded([[1240, 234], [1248, 229], [1271, 232], [1272, 257], [1262, 261], [1244, 260], [1239, 250]], 4)} fill="url(#blob)" />
      <path d={rounded([[1238, 1078], [1246, 1072], [1268, 1073], [1271, 1088], [1269, 1102], [1256, 1108], [1243, 1102], [1237, 1090]], 6)} fill="url(#blob)" />
      <path d="M1220 1074l6 2 3 12-2 11-5-4-3-10zM1218 1115l12-1 30-1 8 4 6 14-20 1-26-1-6-2-4 3z" fill="#40f8b8" />
      <path d="M1229 1113l2 8 1 12h3l-1-12 2-8z" fill="#000080" />
      <circle cx="1252" cy="1078" r="6" fill="none" stroke="#004080" strokeWidth="1.5" />
      <circle cx="1252" cy="1078" r="2.5" fill="none" stroke="#004080" />

      {Array.from({ length: 32 }, (_, i) => (
        <Marker
          key={i}
          index={i}
          x={i % 2 ? 1464 : 1383}
          y={Math.round(300.7 + Math.floor(i / 2) * 45.35)}
          h={31}
          angle={okAngles[i]}
          tone="#38c848"
        />
      ))}
      {Array.from({ length: 24 }, (_, i) => (
        <Marker key={i} index={i} x={i % 2 ? 1921 : 1839} y={389 + Math.floor(i / 2) * 45} h={30} angle="0.0" tone="#e03c3c" />
      ))}

      <g fill="none" strokeWidth="2.4">
        <path d="M1270 348h44v547h-44zM1289 348v547" stroke="#50d840" />
        <path d="M1768 381h49v537h-49z" stroke="#3c90e4" />
        <path d="M1686.5 266.5h278v428h-278zM1728.5 290h186v67h-186z" stroke="#bc70f8" />
      </g>
      <path d="M1288 621 1768 649" stroke="#ffc028" strokeWidth="3" />
      <circle cx="1288" cy="621" r="5.5" fill="none" stroke="#ffc028" strokeWidth="3" />
      <circle cx="1768" cy="649" r="5.5" fill="none" stroke="#ffc028" strokeWidth="3" />
      <rect x="1269" y="340" width="17" height="7" fill="#000" />
      <text x="1270" y="345" fill="#c0c0c0" fontSize="4">
        E1 ROI
      </text>
      <rect x="1767" y="374" width="18" height="7" fill="#000" />
      <text x="1769" y="379" fill="#c0c0c0" fontSize="4">
        E2 ROI
      </text>
      <rect x="1686" y="262" width="106" height="14" fill="#000" />
      <text x="1689" y="272" fill="#bc70f8" fontSize="10">
        Align 1.00 d=(0.0,0.0)
      </text>
      <rect x="1529" y="629" width="67" height="16" fill="#000" />
      <text x="1532" y="641" fill="#ffc028" fontSize="12">
        d=1432.87
      </text>
    </svg>
  );
}

/* ---------- Result viewer ---------- */

const timings = [
  ["Image Load 3D_4", "LD3D", "631", "w-[31px] bg-[#008c80]"],
  ["PlaneFit3D_3", "ALG", "429", "w-[31px] bg-[#1e78b4]"],
  ["MultiBlob3D_5", "ALG", "728", "w-[31px] bg-[#1e78b4]"],
  ["MultiBlob3D_5_copy", "ALG", "705", "w-[31px] bg-[#1e78b4]"],
  ["Measurement3D_6", "ALG", "748", "w-[31px] bg-[#1e78b4]"],
  ["Overlay_5", "OVL", "79", "w-[26px] bg-[#8c68ac]"],
];

function Total({ label, value, box, tone }: { label: string; value: string; box: string; tone: string }) {
  return (
    <div className={"flex h-[35px] items-center gap-2 rounded-[4px] px-[10px] " + box}>
      <span className="text-[10px] font-semibold text-[#6c88a8]">{label}</span>
      <b className={"text-[15px] font-semibold " + tone}>{value}</b>
    </div>
  );
}

function ResultViewer() {
  return (
    <section className="mt-[5px] mr-[7px] mb-[5px] flex min-w-0 flex-1 flex-col bg-[#1e1e1e]">
      <header className="flex h-10 shrink-0 items-center justify-between bg-[#222735] pt-[2px] pr-4 pl-[10px]">
        <h2 className="text-[13px] font-bold text-white">Result Viewer</h2>
        <button aria-label="Close viewer">
          <svg viewBox="0 0 10 10" className="size-[9px]" stroke="#7c8290" aria-hidden="true">
            <path d="M.5 .5l9 9M9.5 .5l-9 9" />
          </svg>
        </button>
      </header>
      <div className="flex min-h-0 flex-1 flex-col px-[10px] pt-[10px] pb-[11px]">
        <div className="relative shrink-0">
          <select aria-label="Result" className="h-[35px] w-full appearance-none rounded-[3px] bg-[#323232] px-[10px] pt-px text-xs text-white">
            <option>Overlay_5</option>
          </select>
          <svg viewBox="0 0 10 6" className="pointer-events-none absolute top-[15px] right-[10px] h-[6px] w-[10px]" aria-hidden="true">
            <path d="M0 0h10L5 6z" fill="#9a9a9a" />
          </svg>
        </div>
        <div className="mt-[14px] min-h-0 flex-1 bg-black">
          <HeightMap />
        </div>
        <div className="mt-[15px] flex h-10 shrink-0 items-center gap-[2px] bg-[#141318] px-px">
          {timings.map((t) => (
            <span key={t[0]} className={"flex h-[35px] items-center justify-center rounded-[3px] text-[9px] font-medium text-white " + t[3]}>
              {t[2]}ms
            </span>
          ))}
          <div className="ml-auto flex items-center gap-[6px]">
            <Total label="OH" value="8ms" box="bg-[#2a1a1a]" tone="text-[#ffb074]" />
            <Total label="NET" value="1887ms" box="bg-[#1a2a1a]" tone="text-[#78f878]" />
            <Total label="TOTAL" value="1895ms" box="bg-[#1a2a3a]" tone="text-[#78d4ff]" />
            <button className="h-[30px] w-[73px] bg-[#005078] text-xs font-semibold text-white">Detail</button>
          </div>
        </div>
        <h3 className="mt-[10px] flex h-[27px] shrink-0 items-center bg-[#222735] px-[7px] pt-px text-xs font-semibold text-[#838ba0]">Process Time</h3>
        <table className="w-full shrink-0 table-fixed border border-[#303033] text-left text-xs text-[#f4f4f4]">
          <thead>
            <tr className="h-7 bg-black">
              <th className="border-r border-[#333] pl-[11px] font-semibold">Node</th>
              <th className="w-[50px] border-r border-[#333] pl-[10px] font-semibold">Type</th>
              <th className="w-[56px] border-r border-[#333] pl-[10px] font-semibold">Total</th>
              <th className="w-[56px] border-r border-[#333] pl-[10px] font-semibold">Algo</th>
              <th className="w-[51px] pl-[10px] font-semibold">OH</th>
            </tr>
          </thead>
          <tbody>
            {timings.map(([name, type, ms]) => (
              <tr key={name} className="h-[19px] border-b-2 border-[#3c3c3e] bg-[#2c2c2e] even:bg-[#323232]">
                {[name, type, ms, ms, "0"].map((cell, i) => (
                  <td key={i} className="pl-[3px] leading-[17px]">
                    {cell}
                  </td>
                ))}
              </tr>
            ))}
          </tbody>
        </table>
      </div>
    </section>
  );
}

export default function App() {
  return (
    <div className="flex h-screen flex-col overflow-hidden bg-[#141318] font-['Noto_Sans','Noto_Sans_CJK_KR',sans-serif]">
      <header className="flex h-[33px] shrink-0 items-center justify-end border-t-2 border-[#005078] pr-[14px]">
        <button aria-label="Close">
          <svg viewBox="0 0 12 12" className="size-3" stroke="#fff" strokeWidth="1.5" aria-hidden="true">
            <path d="M.5 .5l11 11M11.5 .5l-11 11" />
          </svg>
        </button>
      </header>
      <main className="flex min-h-0 flex-1">
        <div className="flex w-[53.2%] flex-col gap-[3px] pt-[5px] pr-[5px] pb-[5px] pl-[2px]">
          <Toolbars />
          <div className="flex min-h-0 flex-1 gap-[3px]">
            <Toolbox />
            <div className="flex min-w-0 flex-1 flex-col">
              <FlowCanvas />
              <NodeInfo />
            </div>
          </div>
        </div>
        <div className="w-2 shrink-0 bg-[#434345]" />
        <ResultViewer />
      </main>
      <footer className="h-[6px] shrink-0 bg-[#1e1e1e]" />
    </div>
  );
}
